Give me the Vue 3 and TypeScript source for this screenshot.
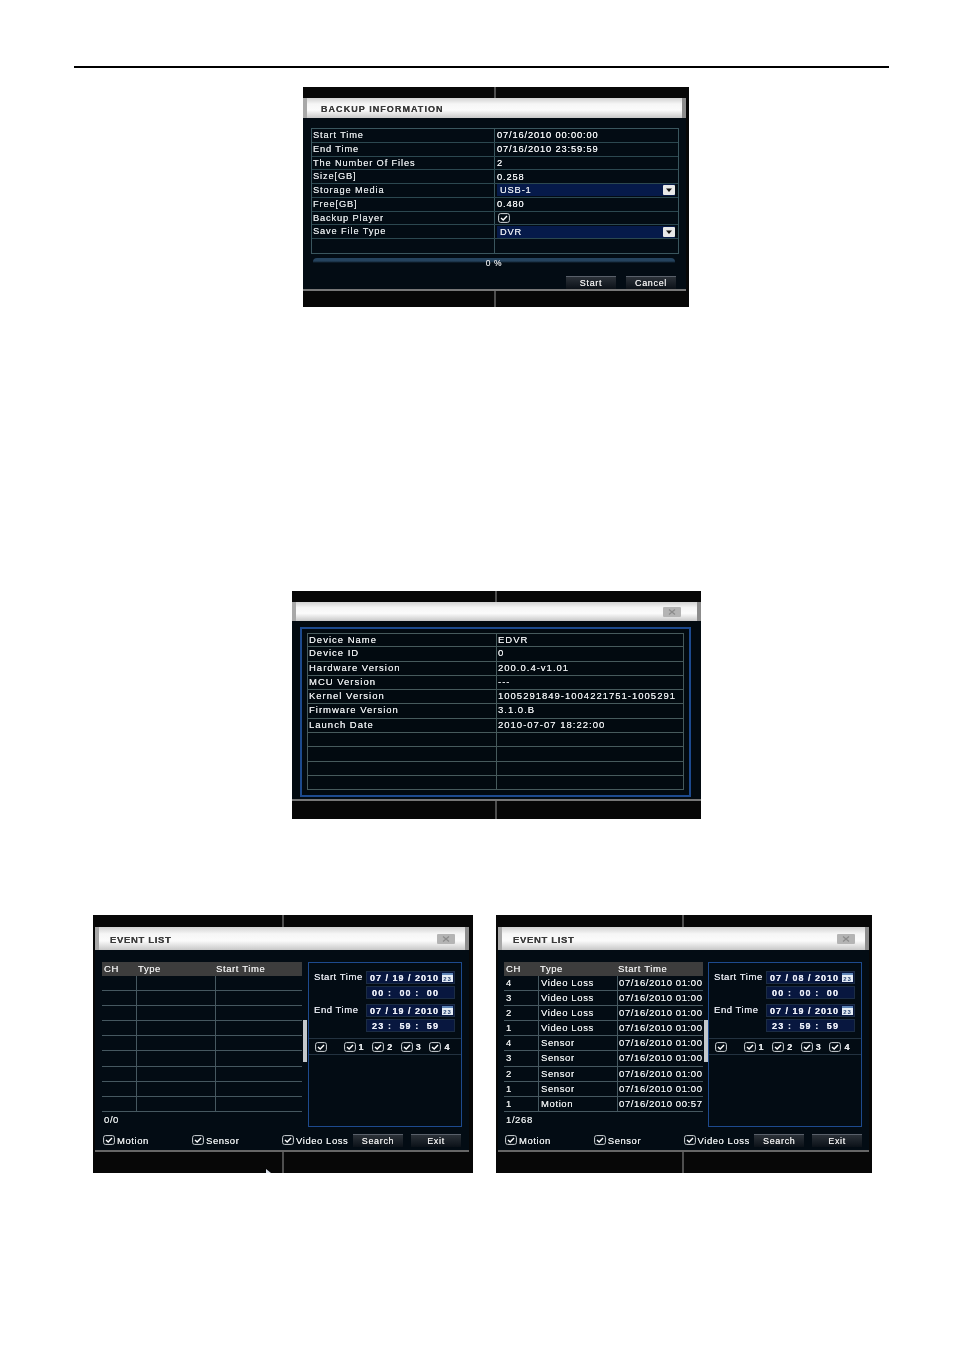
<script setup lang="ts">
interface EventRow { ch: string; type: string; time: string }
interface EventList {
  cls: string; start: string; end: string; page: string; rows: EventRow[];
}
const backup = [
  { label: 'Start Time', value: '07/16/2010 00:00:00', kind: 'text' },
  { label: 'End Time', value: '07/16/2010 23:59:59', kind: 'text' },
  { label: 'The Number Of Files', value: '2', kind: 'text' },
  { label: 'Size[GB]', value: '0.258', kind: 'text' },
  { label: 'Storage Media', value: 'USB-1', kind: 'select' },
  { label: 'Free[GB]', value: '0.480', kind: 'text' },
  { label: 'Backup Player', value: '', kind: 'check' },
  { label: 'Save File Type', value: 'DVR', kind: 'select' },
  { label: '', value: '', kind: 'text' },
]
const device = [
  ['Device Name', 'EDVR'],
  ['Device ID', '0'],
  ['Hardware Version', '200.0.4-v1.01'],
  ['MCU Version', '---'],
  ['Kernel Version', '1005291849-1004221751-1005291'],
  ['Firmware Version', '3.1.0.B'],
  ['Launch Date', '2010-07-07 18:22:00'],
  ['', ''], ['', ''], ['', ''], ['', ''],
]
const blank: EventRow = { ch: '', type: '', time: '' }
const t1 = '07/16/2010 01:00'
const lists: EventList[] = [
  { cls: 'ev-a', start: '07 / 19 / 2010', end: '07 / 19 / 2010', page: '0/0', rows: Array(9).fill(blank) },
  {
    cls: 'ev-b', start: '07 / 08 / 2010', end: '07 / 19 / 2010', page: '1/268',
    rows: [
      { ch: '4', type: 'Video Loss', time: t1 },
      { ch: '3', type: 'Video Loss', time: t1 },
      { ch: '2', type: 'Video Loss', time: t1 },
      { ch: '1', type: 'Video Loss', time: t1 },
      { ch: '4', type: 'Sensor', time: t1 },
      { ch: '3', type: 'Sensor', time: t1 },
      { ch: '2', type: 'Sensor', time: t1 },
      { ch: '1', type: 'Sensor', time: t1 },
      { ch: '1', type: 'Motion', time: '07/16/2010 00:57' },
    ],
  },
]
</script>

<template>
  <div class="page">
    <div class="rule"></div>

    <section class="shot s-backup">
      <div class="band top"><i></i></div>
      <div class="dialog">
        <div class="title">BACKUP INFORMATION</div>
        <div class="body">
          <div class="btable">
            <div v-for="(r, i) in backup" :key="i" class="brow">
              <span class="bl">{{ r.label }}</span>
              <span class="bv">
                <template v-if="r.kind === 'text'">{{ r.value }}</template>
                <span v-else-if="r.kind === 'select'" class="select">{{ r.value }}
                  <svg class="arrow" viewBox="0 0 12 10"><rect width="12" height="10" rx="1" fill="#e8e8e8"/><path d="M3 3.5h6L6 7z" fill="#111"/></svg>
                </span>
                <svg v-else class="chk" viewBox="0 0 12 10"><rect x=".6" y=".6" width="10.8" height="8.8" rx="2" fill="none" stroke="#cfd4d8"/><path d="M3 5l2.2 2L9 3" fill="none" stroke="#fff" stroke-width="1.4"/></svg>
              </span>
            </div>
          </div>
          <div class="progress">0 %</div>
          <div class="actions">
            <span class="btn">Start</span>
            <span class="btn">Cancel</span>
          </div>
        </div>
      </div>
      <div class="band bot"><i></i></div>
    </section>

    <section class="shot s-device">
      <div class="band top"><i></i></div>
      <div class="dialog">
        <div class="title">
          <svg class="close" viewBox="0 0 18 10"><rect width="18" height="10" rx="1" fill="#b4b4b4"/><path d="M6 2.5l6 5M12 2.5l-6 5" stroke="#8b8b8b" stroke-width="1.2"/></svg>
        </div>
        <div class="body">
          <div class="frame">
            <div v-for="(r, i) in device" :key="i" class="drow">
              <span>{{ r[0] }}</span>
              <span>{{ r[1] }}</span>
            </div>
          </div>
        </div>
      </div>
      <div class="band bot"><i></i></div>
    </section>

    <div class="pair">
      <section v-for="ev in lists" :key="ev.cls" class="shot event" :class="ev.cls">
        <div class="band top"><i></i></div>
        <div class="dialog">
          <div class="title">
            EVENT LIST
            <svg class="close" viewBox="0 0 18 10"><rect width="18" height="10" rx="1" fill="#b4b4b4"/><path d="M6 2.5l6 5M12 2.5l-6 5" stroke="#8b8b8b" stroke-width="1.2"/></svg>
          </div>
          <div class="body">
            <div class="main">
              <div class="list">
                <div class="lhead"><span>CH</span><span>Type</span><span>Start Time</span></div>
                <div v-for="(r, i) in ev.rows" :key="i" class="lrow">
                  <span>{{ r.ch }}</span><span>{{ r.type }}</span><span>{{ r.time }}</span>
                </div>
                <div class="lfoot">{{ ev.page }}</div>
                <div class="handle"></div>
              </div>
              <div class="panel">
                <div class="times">
                  <span class="tl">Start Time</span>
                  <span class="field date">{{ ev.start }}<svg class="cal" viewBox="0 0 11 9"><rect width="11" height="9" fill="#e6eef6"/><rect y="0" width="11" height="2" fill="#5f86b8"/><text x="5.5" y="8" font-size="6" font-weight="700" text-anchor="middle" fill="#23406e" font-family="Liberation Sans, sans-serif">23</text></svg></span>
                  <span></span>
                  <span class="field clock">00 :&nbsp; 00 :&nbsp; 00</span>
                  <span class="tl">End Time</span>
                  <span class="field date">{{ ev.end }}<svg class="cal" viewBox="0 0 11 9"><rect width="11" height="9" fill="#e6eef6"/><rect y="0" width="11" height="2" fill="#5f86b8"/><text x="5.5" y="8" font-size="6" font-weight="700" text-anchor="middle" fill="#23406e" font-family="Liberation Sans, sans-serif">23</text></svg></span>
                  <span></span>
                  <span class="field clock">23 :&nbsp; 59 :&nbsp; 59</span>
                </div>
                <div class="chs">
                  <span v-for="c in ['', '1', '2', '3', '4']" :key="c" class="ch">
                    <svg class="chk" viewBox="0 0 12 10"><rect x=".6" y=".6" width="10.8" height="8.8" rx="2" fill="none" stroke="#cfd4d8"/><path d="M3 5l2.2 2L9 3" fill="none" stroke="#fff" stroke-width="1.4"/></svg>{{ c }}
                  </span>
                </div>
              </div>
            </div>
            <div class="foot">
              <span class="opt o1"><svg class="chk" viewBox="0 0 12 10"><rect x=".6" y=".6" width="10.8" height="8.8" rx="2" fill="none" stroke="#cfd4d8"/><path d="M3 5l2.2 2L9 3" fill="none" stroke="#fff" stroke-width="1.4"/></svg>Motion</span>
              <span class="opt o2"><svg class="chk" viewBox="0 0 12 10"><rect x=".6" y=".6" width="10.8" height="8.8" rx="2" fill="none" stroke="#cfd4d8"/><path d="M3 5l2.2 2L9 3" fill="none" stroke="#fff" stroke-width="1.4"/></svg>Sensor</span>
              <span class="opt o3"><svg class="chk" viewBox="0 0 12 10"><rect x=".6" y=".6" width="10.8" height="8.8" rx="2" fill="none" stroke="#cfd4d8"/><path d="M3 5l2.2 2L9 3" fill="none" stroke="#fff" stroke-width="1.4"/></svg>Video Loss</span>
              <span class="btn">Search</span>
              <span class="btn">Exit</span>
            </div>
          </div>
        </div>
        <div class="band bot"><i></i></div>
        <svg v-if="ev.cls === 'ev-a'" class="cursor" viewBox="0 0 6 4"><path d="M0 0l5 4H0z" fill="#dfe6f0"/></svg>
      </section>
    </div>
  </div>
</template>

<style>
html, body { margin: 0; background: #fff; }
</style>

<style scoped>
.page {
  width: 954px;
  height: 1351px;
  overflow: hidden;
  background: #fff;
  padding-top: 66px;
  box-sizing: border-box;
  font-family: "Liberation Sans", Arial, sans-serif;
}
.rule { height: 2px; margin: 0 65px 0 74px; background: #000; }

.shot {
  position: relative;
  background: #070707;
  color: #e6e8ea;
  filter: blur(0.5px);
  overflow: hidden;
  text-shadow: 0 0 0.6px currentColor;
}
.band { background: #070707; }
.band i { display: block; width: 2px; height: 100%; background: #4e4e4e; }

.dialog { display: flex; flex-direction: column; }
.title {
  display: flex;
  align-items: center;
  justify-content: space-between;
  box-sizing: border-box;
  color: #3a3a3a;
  font-weight: 700;
  background: linear-gradient(#d2d2d2, #f6f6f6 30%, #fbfbfb 60%, #c8c8c8);
  border-left: 4px solid #a8a8a8;
  border-right: 4px solid #8c8c8c;
}
.body { background: #030c14; box-sizing: border-box; }
.close { width: 18px; height: 10px; }
.chk { width: 12px; height: 10px; flex: none; }

.btn {
  display: flex;
  align-items: center;
  justify-content: center;
  width: 50px;
  height: 13px;
  font-size: 9px;
  letter-spacing: 0.65px;
  color: #e8e8e8;
  background: linear-gradient(#2b3138, #0b1118);
  border-top: 1px solid #59606a;
  box-sizing: border-box;
}

/* backup */
.s-backup { width: 386px; height: 220px; margin: 19px 0 0 303px; }
.s-backup .band.top { height: 11px; }
.s-backup .band.bot { height: 16px; }
.s-backup .band i { margin-left: 191px; }
.s-backup .dialog { width: 383px; }
.s-backup .title { height: 20px; padding: 2px 0 0 14px; font-size: 9px; letter-spacing: 1.05px; }
.s-backup .body { height: 173px; padding: 10px 7px 0 8px; border-bottom: 2px solid #777; }
.btable { border: 1px solid #3a565e; width: 368px; box-sizing: border-box; }
.brow {
  display: grid;
  grid-template-columns: 182px 1fr;
  height: 13.75px;
  border-bottom: 1px solid #2c4850;
  box-sizing: border-box;
  font-size: 9.3px;
  letter-spacing: 0.85px;
  line-height: 12px;
}
.brow:last-child { border-bottom: 0; }
.bl { padding-left: 1px; color: #dde1e3; }
.bv { display: flex; align-items: center; padding-left: 2px; border-left: 1px solid #3a565e; color: #f0f2f4; }
.select {
  flex: 1;
  display: flex;
  align-items: center;
  justify-content: space-between;
  height: 12px;
  margin-right: 3px;
  padding-left: 3px;
  background: #061a4a;
  color: #e2e6ee;
}
.arrow { width: 12px; height: 10px; }
.bv .chk { margin-left: 1px; }
.progress {
  height: 9px;
  margin: 4px 2px 0 2px;
  width: 362px;
  border-radius: 4px 4px 0 0;
  background: linear-gradient(#25435e 0 3px, #030c14 5px);
  text-align: center;
  font-size: 8.5px;
  letter-spacing: 0.7px;
  line-height: 10px;
  color: #d5d8da;
}
.actions { display: flex; justify-content: flex-end; gap: 10px; margin-top: 9px; padding-right: 3px; }

/* device */
.s-device { width: 409px; height: 228px; margin: 284px 0 0 292px; }
.s-device .band.top { height: 11px; }
.s-device .band.bot { height: 18px; }
.s-device .band i { margin-left: 203px; }
.s-device .title { height: 19px; justify-content: flex-end; padding-right: 16px; }
.s-device .body { height: 180px; padding: 6px 10px 4px 8px; border-bottom: 2px solid #777; background: #020a10; }
.frame { height: 170px; padding: 4px 5px; border: 2px solid #1d4a8e; box-sizing: border-box; }
.drow {
  display: grid;
  grid-template-columns: 188px 1fr;
  height: 14.3px;
  box-sizing: border-box;
  border: 1px solid #465a5c;
  border-top: 0;
  font-size: 9.5px;
  letter-spacing: 1px;
  line-height: 12.5px;
}
.drow:first-child { border-top: 1px solid #465a5c; }
.drow span { padding-left: 1px; overflow: hidden; white-space: nowrap; }
.drow span + span { border-left: 1px solid #465a5c; }

/* events */
.pair { display: flex; gap: 23px; margin: 96px 0 0 93px; }
.event { height: 258px; }
.ev-a { width: 380px; }
.ev-b { width: 376px; }
.event .band.top { height: 12px; }
.event .band.bot { height: 21px; }
.ev-a .band i { margin-left: 189px; }
.ev-b .band i { margin-left: 186px; }
.event .dialog { margin-left: 2px; }
.ev-a .dialog { width: 374px; }
.ev-b .dialog { width: 371px; }
.event .title { height: 23px; padding: 1px 10px 0 11px; font-size: 9.5px; letter-spacing: 0.65px; }
.event .body { height: 202px; padding: 12px 7px 0 7px; border-bottom: 2px solid #666; }
.ev-b .body { padding-left: 6px; }
.main { display: flex; gap: 6px; height: 165px; }
.ev-b .main { gap: 5px; }
.list { position: relative; width: 200px; flex: none; font-size: 9.5px; letter-spacing: 0.6px; }
.ev-b .list { width: 199px; }
.lhead, .lrow { display: grid; grid-template-columns: 34px 79px 1fr; box-sizing: border-box; }
.lhead { height: 14px; line-height: 14px; background: #3d3d3d; color: #e8e8e8; }
.lrow {
  height: 15.1px;
  line-height: 14px;
  border-bottom: 1px solid #465860;
  color: #e6e9ea;
}
.lhead span, .lrow span { padding-left: 2px; white-space: nowrap; overflow: hidden; }
.lhead span:last-child, .lrow span:last-child { padding-left: 1px; }
.lrow span + span { border-left: 1px solid #465860; }
.lfoot { height: 15px; line-height: 16px; padding-left: 2px; color: #dfe3e4; }
.handle {
  position: absolute;
  top: 58px;
  right: -5px;
  width: 4px;
  height: 42px;
  background: #c3c8cc;
}
.panel {
  flex: 1;
  border: 1px solid #1d4a8e;
  box-sizing: border-box;
  padding-top: 8px;
  font-size: 9.5px;
  letter-spacing: 0.55px;
}
.times {
  display: grid;
  grid-template-columns: 52px 89px;
  grid-template-rows: 13px 15px 18px 15px;
  align-items: end;
  padding-left: 5px;
}
.tl { height: 13px; line-height: 12px; color: #e4e6ee; white-space: nowrap; }
.field {
  display: flex;
  align-items: center;
  justify-content: center;
  height: 13px;
  box-sizing: border-box;
  background: #08173f;
  border: 1px solid #1b2c44;
  font-weight: 700;
  font-size: 9px;
  letter-spacing: 1px;
  white-space: nowrap;
  color: #e9ecf5;
}
.field.date { justify-content: space-between; padding: 0 1px 0 3px; }
.field.clock { justify-content: flex-start; padding-left: 5px; letter-spacing: 1.15px; }
.cal { width: 11px; height: 9px; flex: none; }
.chs {
  display: flex;
  align-items: center;
  height: 15px;
  margin-top: 6px;
  padding-left: 6px;
  border-top: 1px solid #233240;
  border-bottom: 1px solid #233240;
  font-weight: 700;
}
.ch { display: flex; align-items: center; gap: 3px; width: 28.6px; height: 100%; font-size: 9px; }
.foot { display: flex; align-items: center; height: 14px; margin: 6px 0 0 1px; font-size: 9.5px; letter-spacing: 0.55px; }
.opt { display: flex; align-items: center; gap: 2px; box-sizing: border-box; white-space: nowrap; color: #e6e9ea; }
.o1 { width: 89px; }
.o2 { width: 90px; }
.o3 { width: 71px; }
.foot .btn + .btn { margin-left: 8px; }
.cursor { position: absolute; left: 173px; bottom: 0; width: 6px; height: 4px; }
</style>
